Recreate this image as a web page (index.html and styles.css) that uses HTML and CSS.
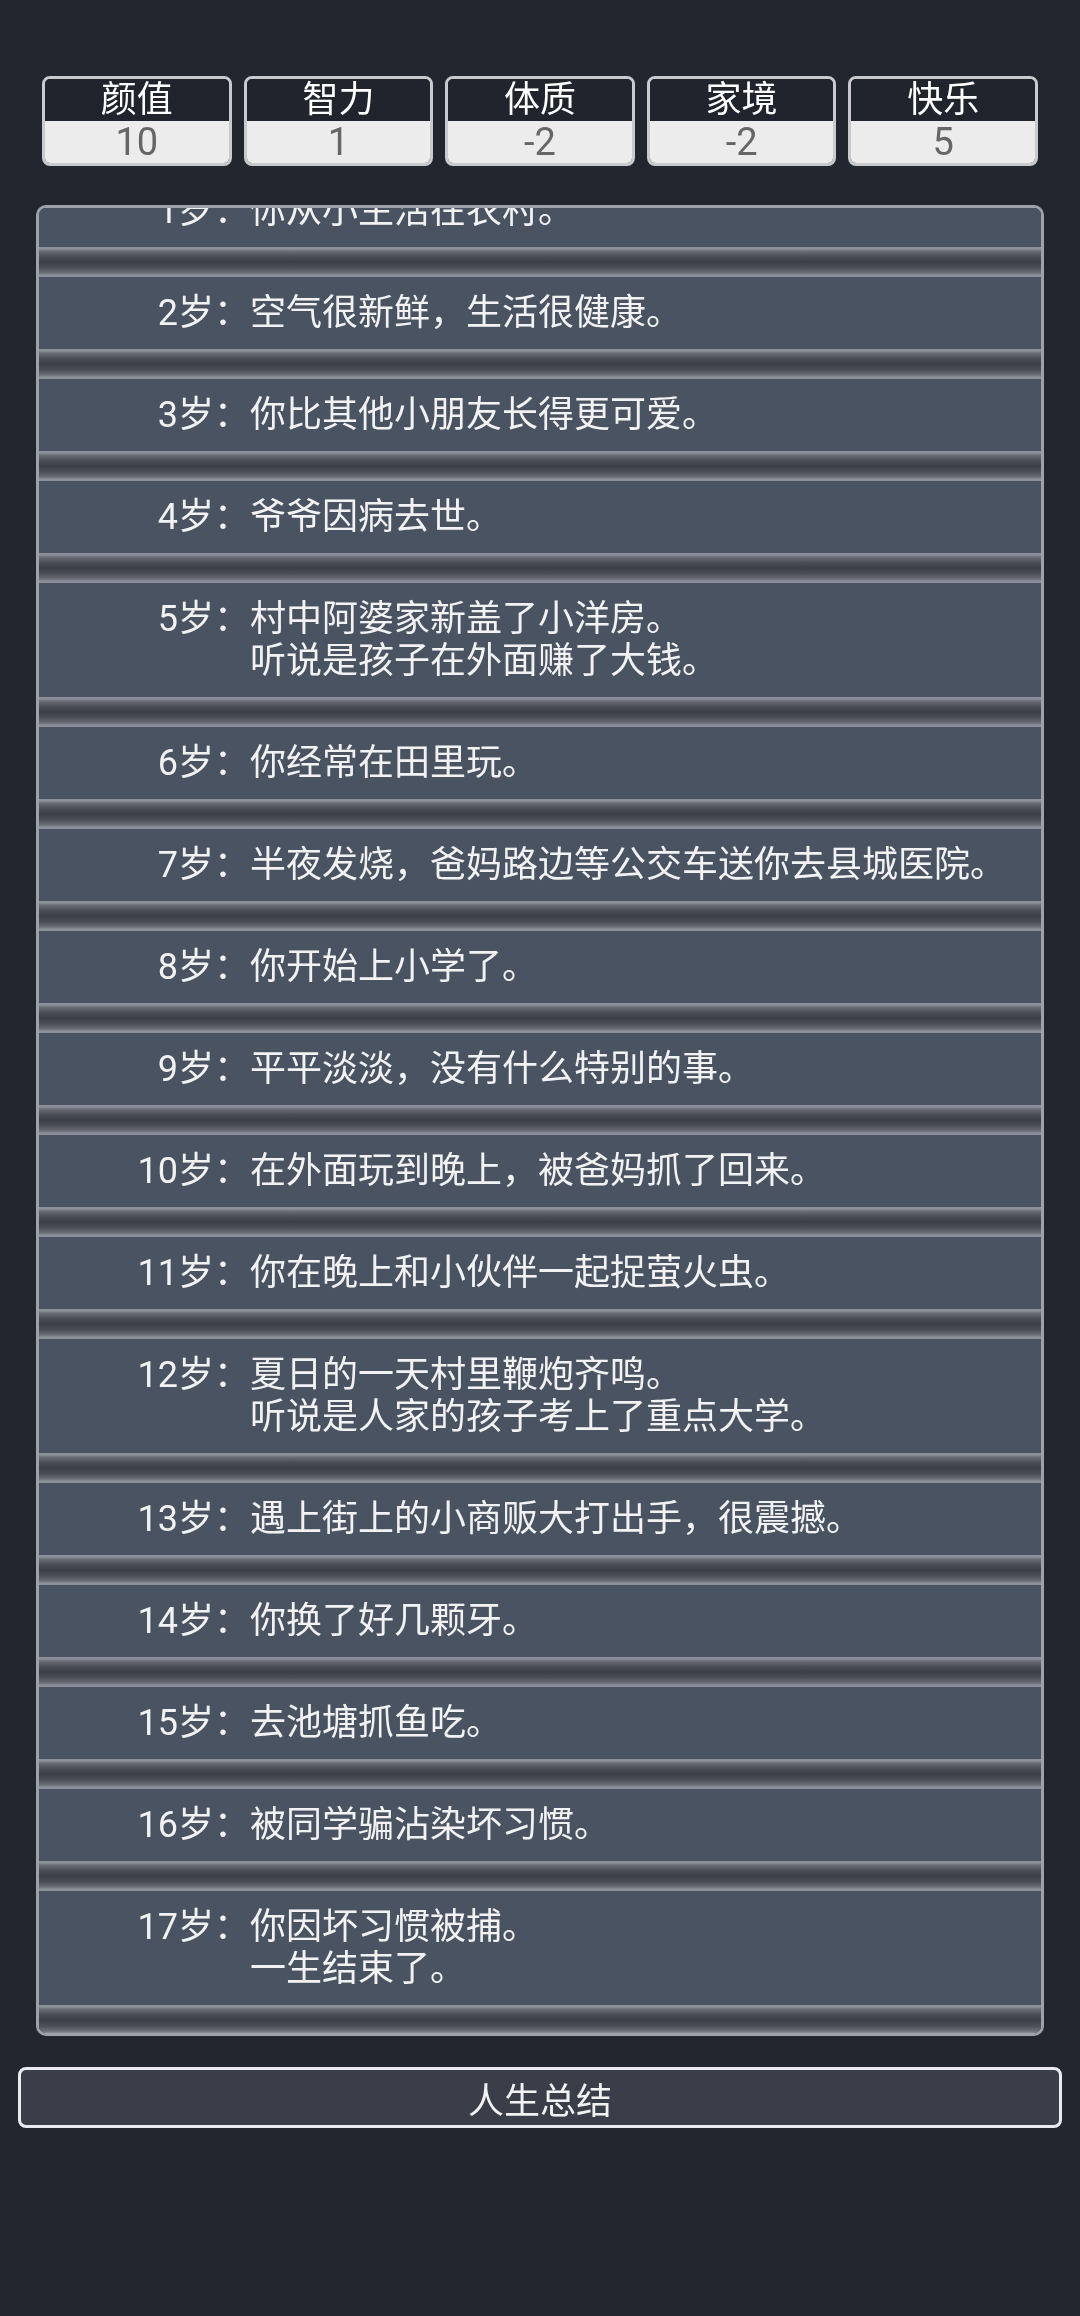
FILE: index.html
```html
<!DOCTYPE html>
<html lang="zh-CN">
<head>
    <meta charset="UTF-8">
    <meta name="viewport" content="width=device-width, initial-scale=1.0">
    <title>人生重开模拟器</title>
    <link rel="stylesheet" href="styles.css">
</head>
<body>
    <ul class="props">
        <li><span class="prop-name">颜值</span><span class="prop-value">10</span></li>
        <li><span class="prop-name">智力</span><span class="prop-value">1</span></li>
        <li><span class="prop-name">体质</span><span class="prop-value">-2</span></li>
        <li><span class="prop-name">家境</span><span class="prop-value">-2</span></li>
        <li><span class="prop-name">快乐</span><span class="prop-value">5</span></li>
    </ul>

    <div class="trajectory" id="trajectory">
        <ul class="events">
            <li><span class="age">1岁：</span><span class="event">你从小生活在农村。</span></li>
            <li><span class="age">2岁：</span><span class="event">空气很新鲜，生活很健康。</span></li>
            <li><span class="age">3岁：</span><span class="event">你比其他小朋友长得更可爱。</span></li>
            <li><span class="age">4岁：</span><span class="event">爷爷因病去世。</span></li>
            <li><span class="age">5岁：</span><span class="event">村中阿婆家新盖了小洋房。<br>听说是孩子在外面赚了大钱。</span></li>
            <li><span class="age">6岁：</span><span class="event">你经常在田里玩。</span></li>
            <li><span class="age">7岁：</span><span class="event">半夜发烧，爸妈路边等公交车送你去县城医院。</span></li>
            <li><span class="age">8岁：</span><span class="event">你开始上小学了。</span></li>
            <li><span class="age">9岁：</span><span class="event">平平淡淡，没有什么特别的事。</span></li>
            <li><span class="age">10岁：</span><span class="event">在外面玩到晚上，被爸妈抓了回来。</span></li>
            <li><span class="age">11岁：</span><span class="event">你在晚上和小伙伴一起捉萤火虫。</span></li>
            <li><span class="age">12岁：</span><span class="event">夏日的一天村里鞭炮齐鸣。<br>听说是人家的孩子考上了重点大学。</span></li>
            <li><span class="age">13岁：</span><span class="event">遇上街上的小商贩大打出手，很震撼。</span></li>
            <li><span class="age">14岁：</span><span class="event">你换了好几颗牙。</span></li>
            <li><span class="age">15岁：</span><span class="event">去池塘抓鱼吃。</span></li>
            <li><span class="age">16岁：</span><span class="event">被同学骗沾染坏习惯。</span></li>
            <li><span class="age">17岁：</span><span class="event">你因坏习惯被捕。<br>一生结束了。</span></li>
        </ul>
    </div>

    <button class="summary">人生总结</button>

<script>
    // 滚动到最新的一年
    var trajectory = document.getElementById("trajectory");
    trajectory.scrollTop = trajectory.scrollHeight - trajectory.clientHeight - 2;
</script>
</body>
</html>
```

FILE: styles.css
```css
body {
    margin: 0;
    background-color: #21262f;
    color: #f2f2f2;
    font-family: Roboto, "Noto Sans CJK SC", sans-serif;
    font-size: 36px;
}
ul {
    list-style: none;
    margin: 0;
    padding: 0;
}

/* 属性栏 */
.props {
    display: flex;
    gap: 12px;
    margin: 76px 42px 0;
}
.props li {
    flex: 1;
    display: flex;
    flex-direction: column;
    border: 3px solid #c9cacd;
    border-radius: 8px;
    overflow: hidden;
    text-align: center;
}
.prop-name {
    background-color: #20252d;
    color: #fff;
    line-height: 42px;
}
.prop-value {
    background-color: #ececec;
    color: #666;
    font-size: 38px;
    line-height: 42px;
}

/* 人生轨迹 */
.trajectory {
    box-sizing: border-box;
    height: 1831px;
    margin: 39px 36px 0;
    border: 3px solid #9da1a8;
    border-radius: 10px;
    background-color: #4a5361;
    overflow-y: auto;
    scrollbar-width: none;
}
.trajectory::-webkit-scrollbar {
    display: none;
}
.events li {
    display: flex;
    line-height: 42px;
    padding: 15px 0 45px;
    background: linear-gradient(to top,
        #8c9098 0, #8c9098 2px,
        #6a6f78 4px, #4a4f58 9px, #3a3f48 15px, #4a4f58 21px, #6a6f78 26px,
        #8c9098 28px, #8c9098 30px,
        #4a5361 30px);
}
.age {
    flex: none;
    width: 211px;
    text-align: right;
    white-space: nowrap;
}
.event {
    flex: 1;
}

.summary {
    display: block;
    box-sizing: border-box;
    width: calc(100% - 36px);
    height: 61px;
    margin: 31px 18px 0;
    border: 3px solid #e9ebf0;
    border-radius: 8px;
    background-color: #3a3e48;
    color: #f2f2f2;
    font-family: inherit;
    font-size: 36px;
    padding: 0;
    cursor: pointer;
}
```
